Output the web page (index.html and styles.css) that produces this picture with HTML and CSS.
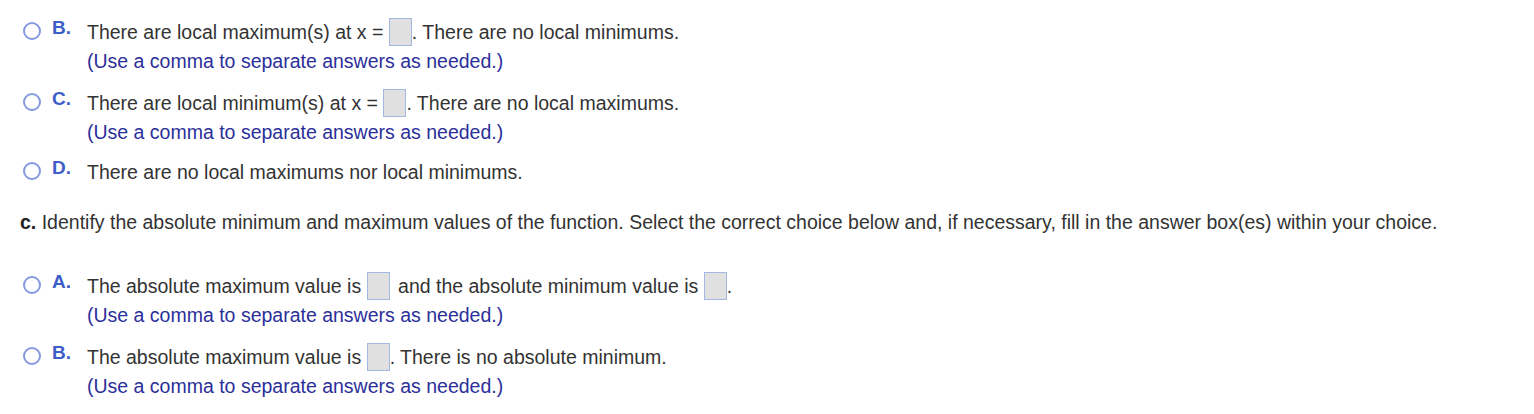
FILE: index.html
```html
<!DOCTYPE html>
<html>
<head>
<meta charset="utf-8">
<link rel="stylesheet" href="styles.css">
</head>
<body>
<div class="page">
  <div class="option opt-b1">
    <span class="radio"></span>
    <span class="label">B.</span>
    <div class="content">
      <div class="main">There are local maximum(s) at x = <span class="box"></span>. There are no local minimums.</div>
      <div class="hint">(Use a comma to separate answers as needed.)</div>
    </div>
  </div>
  <div class="option opt-c">
    <span class="radio"></span>
    <span class="label">C.</span>
    <div class="content">
      <div class="main">There are local minimum(s) at x = <span class="box"></span>. There are no local maximums.</div>
      <div class="hint">(Use a comma to separate answers as needed.)</div>
    </div>
  </div>
  <div class="option opt-d">
    <span class="radio"></span>
    <span class="label">D.</span>
    <div class="content">
      <div class="main">There are no local maximums nor local minimums.</div>
    </div>
  </div>
  <p class="question"><b>c.</b> Identify the absolute minimum and maximum values of the function. Select the correct choice below and, if necessary, fill in the answer box(es) within your choice.</p>
  <div class="option opt-a">
    <span class="radio"></span>
    <span class="label">A.</span>
    <div class="content">
      <div class="main">The absolute maximum value is <span class="box sp"></span> and the absolute minimum value is <span class="box"></span>.</div>
      <div class="hint">(Use a comma to separate answers as needed.)</div>
    </div>
  </div>
  <div class="option opt-b2">
    <span class="radio"></span>
    <span class="label">B.</span>
    <div class="content">
      <div class="main">The absolute maximum value is <span class="box"></span>. There is no absolute minimum.</div>
      <div class="hint">(Use a comma to separate answers as needed.)</div>
    </div>
  </div>
</div>
</body>
</html>
```

FILE: styles.css
```css
html, body {
  margin: 0;
  padding: 0;
  background: #ffffff;
}
body {
  font-family: "Liberation Sans", Arial, sans-serif;
  font-size: 19.5px;
  color: #333333;
}
.page {
  padding: 18px 0 0 23px;
}
.option {
  display: flex;
  align-items: flex-start;
}
.radio {
  width: 14px;
  height: 14px;
  border: 2px solid #8499e0;
  border-radius: 50%;
  margin-top: 4px;
  flex: none;
}
.label {
  font-size: 19px;
  font-weight: bold;
  color: #3d5dc8;
  width: 35px;
  margin-left: 11px;
  line-height: 20px;
  flex: none;
}
.content {
  display: flex;
  flex-direction: column;
}
.main {
  height: 28px;
  line-height: 28px;
  white-space: nowrap;
}
.box {
  display: inline-block;
  width: 21px;
  height: 26px;
  border: 1px solid #a4b8e4;
  background: #e0e0e0;
  vertical-align: middle;
  margin-top: -4px;
}
.box.sp { margin-right: 3px; }
.hint {
  color: #2b2f9a;
  line-height: 22px;
  margin-top: 4px;
  white-space: nowrap;
}
.opt-c { margin-top: 17px; }
.opt-d { margin-top: 15px; }
.question {
  margin: 25px 0 0 -3px;
  line-height: 22px;
  white-space: nowrap;
}
.question b { color: #222; }
.opt-a { margin-top: 39px; }
.opt-b2 { margin-top: 17px; }
```
